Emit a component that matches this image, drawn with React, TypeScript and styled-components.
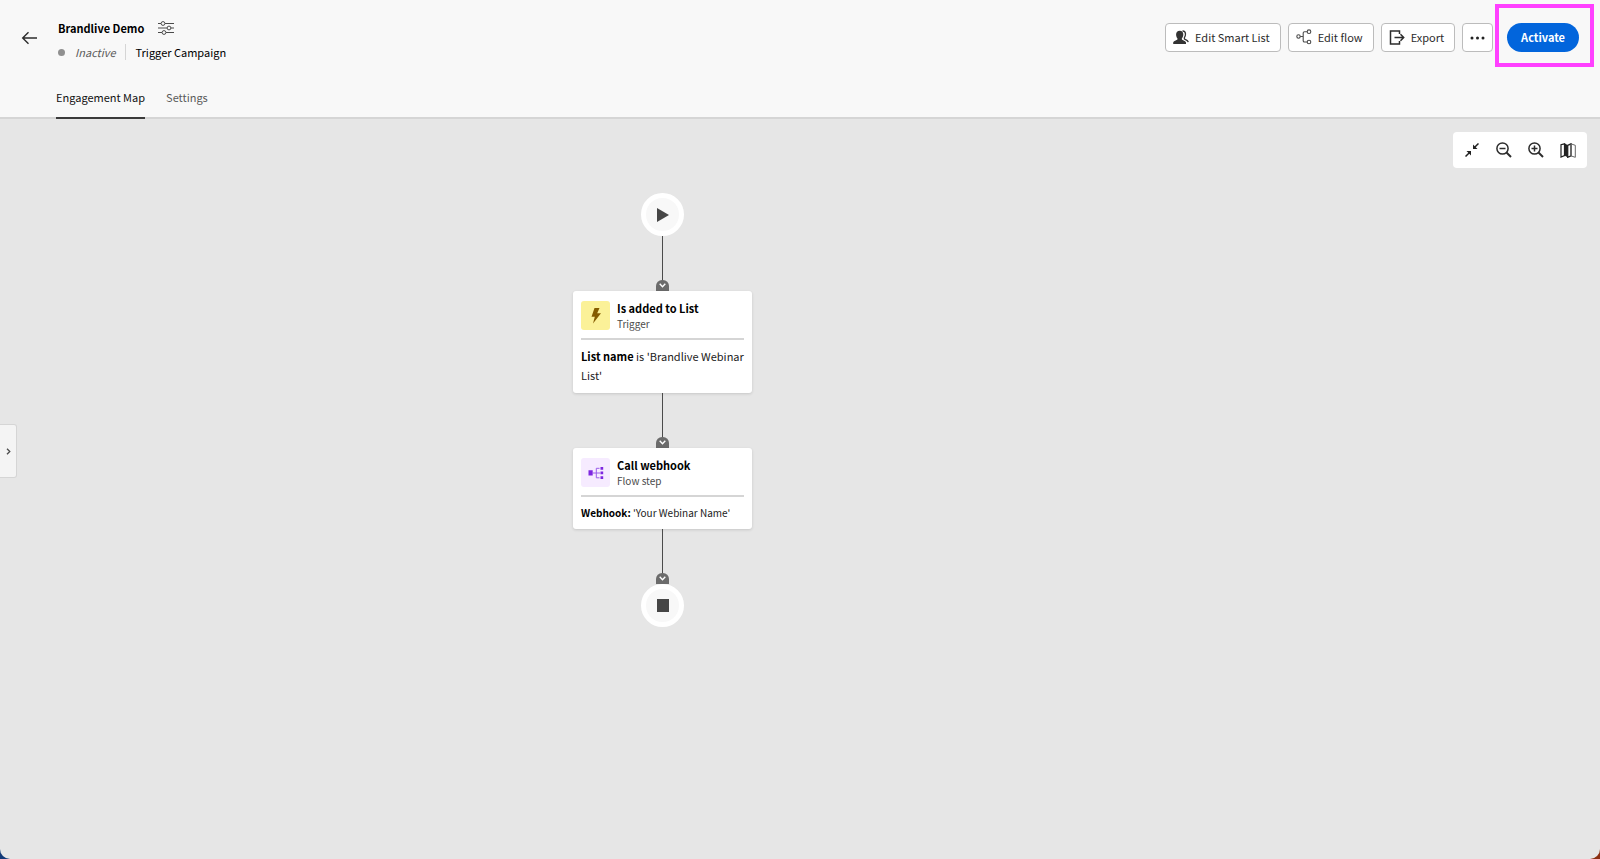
import React from "react";
import styled, { createGlobalStyle } from "styled-components";

const GlobalStyle = createGlobalStyle`
  *, *::before, *::after { box-sizing: border-box; }
  body {
    margin: 0;
    background: linear-gradient(90deg, #123a78 50%, #8c2f12 50%);
    color: #000;
    font-family: "Noto Sans CJK SC", "Open Sans", sans-serif;
    font-size: 11px;
    line-height: 16px;
  }
  button { font: inherit; color: inherit; padding: 0; margin: 0; cursor: pointer; }
  h1, h2, p { margin: 0; }
  svg { display: block; flex: none; }
`;

const Page = styled.div`
  display: flex;
  flex-direction: column;
  min-height: 100vh;
  background: #e6e6e6;
  border-radius: 0 0 10px 10px;
  overflow: hidden;
`;

const Header = styled.header`
  display: flex;
  flex-direction: column;
  background: #f8f8f8;
  border-bottom: 2px solid #d5d5d5;
`;

const TopRow = styled.div`
  display: flex;
  justify-content: space-between;
  align-items: flex-start;
  padding: 20px 21px 0 21px;
`;

const Identity = styled.div`
  display: flex;
  align-items: flex-start;
  gap: 20px;
`;

const IconButton = styled.button`
  display: flex;
  align-items: center;
  justify-content: center;
  border: 0;
  background: none;
`;

const BackButton = styled(IconButton)`
  height: 36px;
`;

const TitleBlock = styled.div`
  display: flex;
  flex-direction: column;
  gap: 8px;
`;

const TitleLine = styled.div`
  display: flex;
  align-items: center;
  gap: 14px;
`;

const Title = styled.h1`
  font-size: 11px;
  line-height: 16px;
  font-weight: 700;
`;

const StatusLine = styled.div`
  display: flex;
  align-items: center;
`;

const StatusDot = styled.span`
  width: 7px;
  height: 7px;
  border-radius: 50%;
  background: #909090;
`;

const StatusText = styled.span`
  margin-left: 10px;
  color: #5a5a5a;
  font-style: italic;
`;

const Kind = styled.span`
  margin-left: 9px;
  padding-left: 10px;
  border-left: 1px solid #d5d5d5;
`;

const Actions = styled.div`
  display: flex;
  align-items: flex-start;
  gap: 7px;
  padding-top: 3px;
`;

const ActionButton = styled.button<{ $square?: boolean }>`
  display: flex;
  align-items: center;
  justify-content: center;
  gap: 6px;
  height: 29px;
  padding: ${(p) => (p.$square ? "0 7px" : "0 10px 1px 7px")};
  border: 1px solid #bcbcbc;
  border-radius: 4px;
  background: #fff;
  color: #2c2c2c;
`;

const PrimarySlot = styled.div`
  position: relative;
  margin-left: 7px;
`;

const PrimaryButton = styled.button`
  display: block;
  height: 29px;
  padding: 0 14px 2px;
  border: 0;
  border-radius: 15px;
  background: #0265dc;
  color: #fff;
  font-weight: 700;
`;

const Highlight = styled.span`
  position: absolute;
  inset: -19px -15px -15px -12px;
  border: 4px solid #ff40ff;
  pointer-events: none;
`;

const Tabs = styled.nav`
  display: flex;
  gap: 21px;
  margin: 29px 0 -2px 56px;
`;

const Tab = styled.button<{ $active?: boolean }>`
  height: 30px;
  padding-bottom: 14px;
  border: 0;
  border-bottom: 2px solid ${(p) => (p.$active ? "#3a3a3a" : "transparent")};
  background: none;
  color: ${(p) => (p.$active ? "#111" : "#5a5a5a")};
`;

const Canvas = styled.main`
  position: relative;
  flex: 1;
  padding: 74px 20px 40px 573px;
`;

const Toolbar = styled.div`
  position: absolute;
  top: 13px;
  right: 13px;
  display: flex;
  align-items: center;
  height: 36px;
  padding: 0 3px;
  border-radius: 4px;
  background: #fff;
`;

const ToolButton = styled(IconButton)`
  width: 32px;
  height: 32px;
`;

const Drawer = styled.button`
  position: absolute;
  top: 305px;
  left: 0;
  display: flex;
  align-items: center;
  justify-content: center;
  width: 17px;
  height: 54px;
  border: 1px solid #d5d5d5;
  border-left: 0;
  border-radius: 0 3px 3px 0;
  background: #f4f4f4;
`;

const Flow = styled.div`
  display: flex;
  flex-direction: column;
  align-items: center;
  width: 179px;
`;

const Terminal = styled.div`
  display: flex;
  align-items: center;
  justify-content: center;
  width: 43px;
  height: 43px;
  border: 5px solid #fff;
  border-radius: 50%;
  background: #f8f8f8;
`;

const Connector = styled.div`
  display: flex;
  flex-direction: column;
  align-items: center;
`;

const Wire = styled.span`
  width: 1px;
  height: 44px;
  background: #4b4b4b;
`;

const Notch = styled.span`
  display: flex;
  align-items: center;
  justify-content: center;
  width: 13px;
  height: 11px;
  border-radius: 6px 6px 0 0;
  background: #6b6b6b;
`;

const Card = styled.article`
  width: 100%;
  padding: 9px 8px 8px;
  border-radius: 3px;
  background: #fff;
  box-shadow: 0 1px 3px rgba(0, 0, 0, 0.14);
`;

const CardHead = styled.div`
  display: flex;
  align-items: flex-start;
  gap: 7px;
  padding-bottom: 6px;
  border-bottom: 2px solid #d5d5d5;
`;

const CardIcon = styled.span<{ $tint: string }>`
  display: flex;
  align-items: center;
  justify-content: center;
  width: 29px;
  height: 29px;
  margin-top: 1px;
  border-radius: 3px;
  background: ${(p) => p.$tint};
`;

const CardTitle = styled.h2`
  font-size: 11px;
  line-height: 16px;
  font-weight: 700;
`;

const CardKind = styled.p`
  font-size: 10px;
  line-height: 16px;
  color: #4b4b4b;
`;

const CardBody = styled.p<{ $small?: boolean }>`
  padding-top: 7px;
  font-size: ${(p) => (p.$small ? "10px" : "11px")};
  line-height: ${(p) => (p.$small ? "17px" : "19px")};
  color: #222;
`;

const Field = styled.b`
  color: #000;
`;

const BackIcon = () => (
  <svg width="17" height="14" viewBox="0 0 17 14" fill="none" stroke="#2c2c2c" strokeWidth="1.4">
    <path d="M16 7H2M7.5 1.3 1.7 7l5.8 5.7" />
  </svg>
);

const SlidersIcon = () => (
  <svg width="16" height="14" viewBox="0 0 16 14" fill="none" stroke="#4b4b4b">
    <path d="M0 2.5h3M7 2.5h9M0 7h9M13 7h3M0 11.5h4M8 11.5h8" />
    <circle cx="5" cy="2.5" r="1.9" />
    <circle cx="11" cy="7" r="1.9" />
    <circle cx="6" cy="11.5" r="1.9" />
  </svg>
);

const PeopleIcon = () => (
  <svg width="16" height="15" viewBox="0 0 16 15">
    <path
      fill="#333"
      d="M6.8.7c2.3 0 3.5 1.500 3.500 3.700 0 1.800-.7 3.200-1.400 3.900v1.100c.3.8 3.900 1.200 4.100 3.200V14H.2v-1.400c.2-2 3.900-2.400 4.200-3.200V8.300C3.700 7.500 3.100 6.200 3.100 4.400 3.100 2.200 4.500.7 6.800.7z"
    />
    <path
      fill="none"
      stroke="#333"
      strokeWidth="1.3"
      d="M9.500.8c2.100.1 3 1.400 3 3.300 0 1.600-.5 2.700-1.100 3.600v1.200c.5.8 3.300 1.100 3.900 3.200"
    />
  </svg>
);

const FlowIcon = () => (
  <svg width="16" height="16" viewBox="0 0 16 16" fill="none" stroke="#4b4b4b" strokeWidth="1.1">
    <circle cx="2.5" cy="7.5" r="1.7" />
    <circle cx="13" cy="2.7" r="1.8" />
    <circle cx="13" cy="13" r="1.8" />
    <path d="M4.2 7.5h3M11.2 2.7H8.5Q7.2 2.7 7.2 4v7.7q0 1.3 1.3 1.3h2.7" />
  </svg>
);

const ExportIcon = () => (
  <svg width="16" height="15" viewBox="0 0 16 15" fill="none" stroke="#2c2c2c" strokeWidth="1.5">
    <path d="M10.5 4V1H1.5v13h9v-3M5.5 7.5h9M11.5 4.3l3.2 3.2-3.2 3.2" />
  </svg>
);

const MoreIcon = () => (
  <svg width="15" height="4" viewBox="0 0 15 4" fill="#222">
    <circle cx="2" cy="2" r="1.5" />
    <circle cx="7.5" cy="2" r="1.5" />
    <circle cx="13" cy="2" r="1.5" />
  </svg>
);

const CollapseIcon = () => (
  <svg width="14" height="14" viewBox="0 0 14 14" fill="#222" stroke="#222">
    <path d="M8 6V1.5L12.5 6z M6 8v4.5L1.5 8z" strokeWidth="0" />
    <path d="M9.2 4.8 13.5.5M4.8 9.2.5 13.5" strokeWidth="1.5" />
  </svg>
);

const ZoomIcon = ({ plus }: { plus?: boolean }) => (
  <svg width="16" height="16" viewBox="0 0 16 16" fill="none" stroke="#2c2c2c" strokeWidth="1.5">
    <circle cx="6.5" cy="6.5" r="5.6" />
    <path d="M10.5 10.5 15 15" strokeWidth="1.9" />
    <path d={plus ? "M3.5 6.5h6M6.5 3.5v6" : "M3.5 6.5h6"} />
  </svg>
);

const MapIcon = () => (
  <svg width="16" height="15" viewBox="0 0 16 15">
    <path fill="none" stroke="#222" strokeWidth="1.2" d="M1 1.700v12.300l3.500-1.500V.8z" />
    <path fill="#222" d="M4.500.3 7.500 2v12.300l-3-1.800z" />
    <path fill="none" stroke="#222" strokeWidth="1.300" d="M7.700 2.400 11 .8v12.100l-3.300 1.400z" />
    <path fill="none" stroke="#666" d="M11 .9l4.300 1.400v12L11 12.900z" />
  </svg>
);

const BoltIcon = () => (
  <svg width="10" height="16" viewBox="0 0 10 16" fill="#855c00">
    <path d="M3.5 0h5L6.2 5.3H10L2 15.5l1.8-6.7H.5z" />
  </svg>
);

const WebhookIcon = () => (
  <svg width="16" height="14" viewBox="0 0 16 14" fill="#7d26e0">
    <path d="M.5 4.3h4.2v5.2H.5zM12.500 1h2.700v2.800h-2.700zM12.500 5.500h2.700v2.800h-2.700zM12.500 10.200h2.700V13h-2.700z" />
    <path d="M4.7 7h7.500M11.500 2.300H8.300v9.500h3.200" fill="none" stroke="#9a5cea" />
  </svg>
);

const Arrow = () => (
  <Connector aria-hidden="true">
    <Wire />
    <Notch>
      <svg width="7" height="5" viewBox="0 0 7 5" fill="none" stroke="#fff" strokeWidth="1.4">
        <path d="m.7.8 2.8 2.9L6.3.8" />
      </svg>
    </Notch>
  </Connector>
);

interface StepProps {
  title: string;
  kind: string;
  tint: string;
  icon: React.ReactNode;
  small?: boolean;
  children: React.ReactNode;
}

const Step = ({ title, kind, tint, icon, small, children }: StepProps) => (
  <Card>
    <CardHead>
      <CardIcon $tint={tint}>{icon}</CardIcon>
      <div>
        <CardTitle>{title}</CardTitle>
        <CardKind>{kind}</CardKind>
      </div>
    </CardHead>
    <CardBody $small={small}>{children}</CardBody>
  </Card>
);

export default function App() {
  return (
    <Page>
      <GlobalStyle />
      <Header>
        <TopRow>
          <Identity>
            <BackButton aria-label="Back"><BackIcon /></BackButton>
            <TitleBlock>
              <TitleLine>
                <Title>Brandlive Demo</Title>
                <IconButton aria-label="Properties"><SlidersIcon /></IconButton>
              </TitleLine>
              <StatusLine>
                <StatusDot />
                <StatusText>Inactive</StatusText>
                <Kind>Trigger Campaign</Kind>
              </StatusLine>
            </TitleBlock>
          </Identity>
          <Actions>
            <ActionButton><PeopleIcon />Edit Smart List</ActionButton>
            <ActionButton><FlowIcon />Edit flow</ActionButton>
            <ActionButton><ExportIcon />Export</ActionButton>
            <ActionButton $square aria-label="More actions"><MoreIcon /></ActionButton>
            <PrimarySlot>
              <PrimaryButton>Activate</PrimaryButton>
              <Highlight />
            </PrimarySlot>
          </Actions>
        </TopRow>
        <Tabs>
          <Tab $active>Engagement Map</Tab>
          <Tab>Settings</Tab>
        </Tabs>
      </Header>
      <Canvas>
        <Toolbar>
          <ToolButton aria-label="Fit to screen"><CollapseIcon /></ToolButton>
          <ToolButton aria-label="Zoom out"><ZoomIcon /></ToolButton>
          <ToolButton aria-label="Zoom in"><ZoomIcon plus /></ToolButton>
          <ToolButton aria-label="Toggle map"><MapIcon /></ToolButton>
        </Toolbar>
        <Drawer aria-label="Open panel">
          <svg width="5" height="7" viewBox="0 0 5 7" fill="none" stroke="#4b4b4b" strokeWidth="1.3">
            <path d="m1 .7 2.8 2.8L1 6.3" />
          </svg>
        </Drawer>
        <Flow>
          <Terminal>
            <svg width="12" height="14" viewBox="0 0 12 14" fill="#464646"><path d="M0 0v14l12-7z" /></svg>
          </Terminal>
          <Arrow />
          <Step title="Is added to List" kind="Trigger" tint="#fbf198" icon={<BoltIcon />}>
            <Field>List name</Field> is 'Brandlive Webinar List'
          </Step>
          <Arrow />
          <Step title="Call webhook" kind="Flow step" tint="#f6ebff" icon={<WebhookIcon />} small>
            <Field>Webhook:</Field> 'Your Webinar Name'
          </Step>
          <Arrow />
          <Terminal>
            <svg width="12" height="13" viewBox="0 0 12 13" fill="#464646"><path d="M0 0h12v13H0z" /></svg>
          </Terminal>
        </Flow>
      </Canvas>
    </Page>
  );
}
